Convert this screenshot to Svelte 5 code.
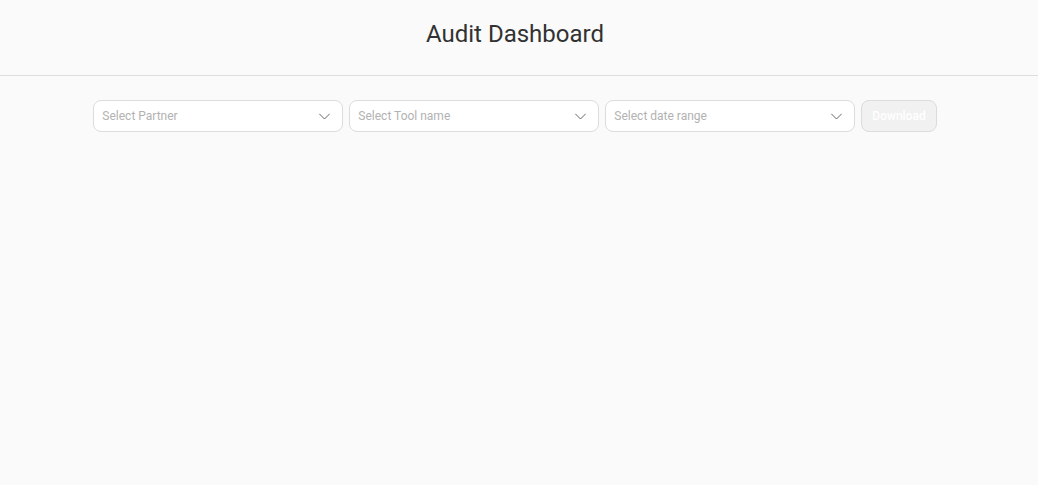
<script>
  const filters = [
    { id: 'partner', label: 'Select Partner' },
    { id: 'tool', label: 'Select Tool name' },
    { id: 'range', label: 'Select date range' }
  ];
</script>

<header>
  <h1>Audit Dashboard</h1>
</header>
<main>
  {#each filters as filter (filter.id)}
    <div class="field">
      <select id={filter.id} aria-label={filter.label}>
        <option value="">{filter.label}</option>
      </select>
      <svg class="chevron" viewBox="0 0 12 8" aria-hidden="true"><path d="M1.3 1.8 6.5 7 11.7 1.8" /></svg>
    </div>
  {/each}
  <button type="button" disabled>Download</button>
</main>

<style>
  :global(body) {
    background: #fafafa;
    font-family: Roboto, sans-serif;
  }
  header {
    padding: 18px 8px 25px 0;
    border-bottom: 1px solid #dedede;
  }
  h1 {
    margin: 0;
    font-size: 24px;
    line-height: 32px;
    font-weight: 400;
    text-align: center;
    color: #323232;
  }
  main {
    display: flex;
    flex-wrap: wrap;
    justify-content: center;
    gap: 6px;
    padding: 24px 8px 24px 0;
  }
  .field {
    display: grid;
    width: 250px;
    align-items: center;
  }
  select,
  .chevron {
    grid-area: 1 / 1;
  }
  select {
    appearance: none;
    width: 100%;
    height: 32px;
    margin: 0;
    padding: 0 28px 0 8px;
    border: 1px solid #dcdcdc;
    border-radius: 8px;
    background: #fff;
    color: #b2b2b2;
    font: 400 12px/16px Roboto, sans-serif;
  }
  .chevron {
    justify-self: end;
    width: 12px;
    height: 8px;
    margin-right: 13px;
    fill: none;
    stroke: #666;
    pointer-events: none;
  }
  button {
    height: 32px;
    padding: 0 10px;
    border: 1px solid #dcdcdc;
    border-radius: 8px;
    background: #f1f1f1;
    color: #fff;
    font: 500 12px/16px Roboto, sans-serif;
  }
</style>
